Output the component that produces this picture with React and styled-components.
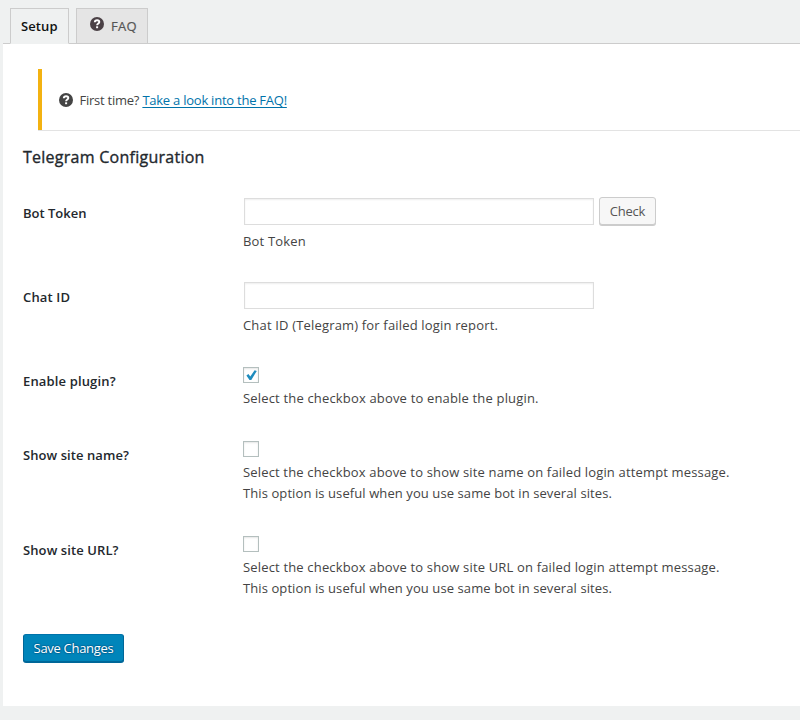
import React from "react";
import styled, { createGlobalStyle, css } from "styled-components";

const GlobalStyle = createGlobalStyle`
  * { box-sizing: border-box; }
  body {
    margin: 0;
    background: #eff1f1;
    color: #444;
    font-family: "Open Sans", "Noto Sans", sans-serif;
    font-size: 13px;
    line-height: 21px;
    overflow: hidden;
  }
`;

const Page = styled.main`
  height: 720px;
  padding: 8px 0 14px 3px;
  display: flex;
  flex-direction: column;
`;

const Tabs = styled.nav`
  display: flex;
  gap: 7px;
  height: 36px;
  padding-left: 7px;
  border-bottom: 1px solid #ccc;
`;

const Tab = styled.a`
  display: flex;
  align-items: center;
  height: 36px;
  width: ${(p) => p.$width}px;
  padding: 1px 0 0 ${(p) => p.$inset}px;
  border: 1px solid #ccc;
  border-bottom-color: ${(p) => (p.$active ? "#eff1f1" : "#ccc")};
  background: ${(p) => (p.$active ? "#eff1f1" : "#e5e5e5")};
  color: ${(p) => (p.$active ? "#111" : "#555")};
  font-size: 13px;
  letter-spacing: ${(p) => p.$spacing}px;
  white-space: nowrap;
`;

const TabIcon = styled.span`
  display: flex;
  margin: -5px 7px 0 0;
  color: #4b4146;
`;

const TabText = styled.span`
  font-weight: ${(p) => (p.$light ? 400 : 600)};
  ${(p) => p.$light && "-webkit-text-stroke: 0.2px currentColor;"}
`;

const Panel = styled.section`
  flex: 1;
  padding: 25px 0 0 20px;
  background: #fff;
`;

const Notice = styled.div`
  display: flex;
  height: 62px;
  margin-left: 15px;
  border-bottom: 1px solid #e3e3e3;
`;

const NoticeBody = styled.div`
  display: flex;
  align-items: center;
  height: 61px;
  padding: 1px 0 0 17px;
  border-left: 4px solid #f3b211;
`;

const NoticeIcon = styled.span`
  display: flex;
  margin-bottom: 1px;
`;

const NoticeText = styled.p`
  margin: 1px 0 0 6.5px;
  letter-spacing: -0.24px;
  white-space: nowrap;
`;

const Link = styled.a`
  color: #0073aa;
  text-decoration: underline;
  text-underline-offset: 2px;
`;

const Title = styled.h2`
  margin: 14px 0 29px;
  color: #23282d;
  font-size: 16px;
  font-weight: 400;
  line-height: 24px;
  letter-spacing: 0.26px;
  -webkit-text-stroke: 0.35px currentColor;
`;

const Row = styled.div`
  display: grid;
  grid-template-columns: 220px 1fr;
  height: ${(p) => p.$height}px;
`;

const Label = styled.label`
  padding-top: 5px;
  color: #23282d;
  font-weight: 600;
  letter-spacing: ${(p) => p.$spacing || 0}px;
`;

const Field = styled.div`
  display: flex;
  flex-direction: column;
  align-items: flex-start;
`;

const Controls = styled.div`
  display: flex;
  align-items: flex-start;
  gap: 5px;
  height: 27px;
  padding-left: 1px;
`;

const TextInput = styled.input`
  width: 350px;
  height: 27px;
  padding: 3px 5px;
  border: 1px solid #ddd;
  border-radius: 0;
  background: #fff;
  box-shadow: inset 0 1px 2px rgba(0, 0, 0, 0.07);
  outline: none;
`;

const Button = styled.button`
  height: 28px;
  padding: 0 0 1px;
  border: 1px solid #ccc;
  border-radius: 3px;
  background: #f7f7f7;
  box-shadow: 0 1px 0 #ccc;
  color: #555;
  font: 400 13px/24px "Open Sans", "Noto Sans", sans-serif;
  white-space: nowrap;
  ${(p) =>
    p.$primary
      ? css`
          width: 101px;
          border-color: #0073aa #006799 #006799;
          background: #0085ba;
          box-shadow: 0 1px 0 #006799;
          color: #fff;
          text-shadow: 0 -1px 1px #006799, 1px 0 1px #006799, 0 1px 1px #006799, -1px 0 1px #006799;
          letter-spacing: -0.3px;
        `
      : css`
          width: 57px;
          margin-top: -1px;
          letter-spacing: -0.25px;
        `}
`;

const CheckFrame = styled.span`
  display: flex;
  align-items: center;
  justify-content: center;
  width: 16px;
  height: 16px;
  margin-top: 1px;
  border: 1px solid #b4bfbe;
  background: #fff;
  box-shadow: inset 0 1px 2px rgba(0, 0, 0, 0.1);
`;

const Description = styled.p`
  margin: ${(p) => (p.$check ? 5 : 6)}px 0 0;
  letter-spacing: 0.17px;
  white-space: nowrap;
`;

const Line = styled.span`
  display: block;
  letter-spacing: ${(p) => p.$spacing}px;
`;

const Actions = styled.div`
  padding-top: 4px;
`;

const HelpIcon = () => (
  <svg width="14" height="14" viewBox="0 0 14 14" aria-hidden="true">
    <circle cx="7" cy="7" r="7" fill="currentColor" />
    <path
      d="M4.8 5.2C4.9 3.9 5.8 3.2 7.1 3.2c1.3 0 2.2.7 2.2 1.8C9.3 6.5 7.1 6.5 7.1 8.3"
      fill="none"
      stroke="#fff"
      strokeWidth="1.9"
    />
    <rect x="6.1" y="9.3" width="2" height="1.9" fill="#fff" />
  </svg>
);

const CheckMark = () => (
  <svg width="14" height="14" viewBox="0 0 14 14" aria-hidden="true">
    <path d="M2.4 7.4 L4.4 6.1 L6.3 8.6 L10.6 2.2 L12.8 3 L7.3 12 L5.5 12 Z" fill="#1e8cbe" />
  </svg>
);

const toggles = [
  {
    label: "Enable plugin?",
    labelSpacing: 0.15,
    checked: true,
    height: 74,
    lines: [{ text: "Select the checkbox above to enable the plugin.", spacing: 0.17 }],
  },
  {
    label: "Show site name?",
    labelSpacing: 0.07,
    height: 95,
    lines: [
      {
        text: "Select the checkbox above to show site name on failed login attempt message.",
        spacing: 0.16,
      },
      { text: "This option is useful when you use same bot in several sites.", spacing: 0.09 },
    ],
  },
  {
    label: "Show site URL?",
    labelSpacing: 0.1,
    height: 95,
    lines: [
      {
        text: "Select the checkbox above to show site URL on failed login attempt message.",
        spacing: 0.165,
      },
      { text: "This option is useful when you use same bot in several sites.", spacing: 0.09 },
    ],
  },
];

export default function App() {
  return (
    <>
      <GlobalStyle />
      <Page>
        <Tabs>
          <Tab $active $width={59} $inset={10} $spacing={0.1}>
            <TabText>Setup</TabText>
          </Tab>
          <Tab $width={72} $inset={13} $spacing={0.3}>
            <TabIcon>
              <HelpIcon />
            </TabIcon>
            <TabText $light>FAQ</TabText>
          </Tab>
        </Tabs>
        <Panel>
          <Notice>
            <NoticeBody>
              <NoticeIcon>
                <HelpIcon />
              </NoticeIcon>
              <NoticeText>
                First time? <Link>Take a look into the FAQ!</Link>
              </NoticeText>
            </NoticeBody>
          </Notice>
          <Title>Telegram Configuration</Title>
          <Row $height={84}>
            <Label>Bot Token</Label>
            <Field>
              <Controls>
                <TextInput type="text" />
                <Button type="button">Check</Button>
              </Controls>
              <Description>Bot Token</Description>
            </Field>
          </Row>
          <Row $height={84}>
            <Label $spacing={0.15}>Chat ID</Label>
            <Field>
              <Controls>
                <TextInput type="text" />
              </Controls>
              <Description>Chat ID (Telegram) for failed login report.</Description>
            </Field>
          </Row>
          {toggles.map((t) => (
            <Row key={t.label} $height={t.height}>
              <Label $spacing={t.labelSpacing}>{t.label}</Label>
              <Field>
                <CheckFrame role="checkbox" aria-checked={!!t.checked}>
                  {t.checked && <CheckMark />}
                </CheckFrame>
                <Description $check>
                  {t.lines.map((line) => (
                    <Line key={line.text} $spacing={line.spacing}>
                      {line.text}
                    </Line>
                  ))}
                </Description>
              </Field>
            </Row>
          ))}
          <Actions>
            <Button type="submit" $primary>
              Save Changes
            </Button>
          </Actions>
        </Panel>
      </Page>
    </>
  );
}
